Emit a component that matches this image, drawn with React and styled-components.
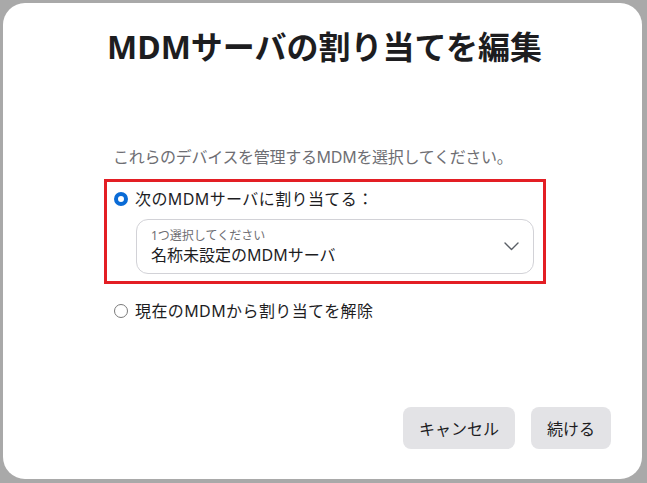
import React from "react";
import styled, { createGlobalStyle } from "styled-components";

const Global = createGlobalStyle`
  html, body { margin: 0; padding: 0; background: #a9a9a9; }
  body { font-family: "Noto Sans", "Noto Sans CJK JP", sans-serif; }
  #root { padding: 3px 5px 4px 3px; box-sizing: border-box; height: 483px; }
`;

const Panel = styled.div`
  background: #fff;
  border-radius: 22px;
  height: 476px;
  box-sizing: border-box;
  padding: 24px 31px 30px 31px;
  display: flex;
  flex-direction: column;
`;

const Title = styled.h1`
  margin: 0;
  text-align: center;
  font-size: 32px;
  line-height: 40px;
  font-weight: 700;
  color: #1d1d1f;
  padding-left: 4px;
`;

const Content = styled.div`
  width: 442px;
  margin: 79px 0 0 70px;
  display: flex;
  flex-direction: column;
`;

const Subtitle = styled.p`
  margin: 0 0 11px 9px;
  font-size: 16px;
  line-height: 22px;
  letter-spacing: -0.3px;
  color: #6e6e73;
`;

const Highlight = styled.div`
  border: 3px solid #e31e24;
  padding: 6px 9px 7px 7px;
  display: flex;
  flex-direction: column;
  gap: 9px;
`;

const OptionRow = styled.label`
  display: flex;
  align-items: center;
  gap: 7px;
  font-size: 16px;
  line-height: 22px;
  letter-spacing: 0.4px;
  color: #1d1d1f;
  padding-left: ${(p) => p.$indent || 0}px;
  margin-top: ${(p) => p.$top || 0}px;
`;

const Radio = styled.span`
  width: 14px;
  height: 14px;
  border-radius: 50%;
  box-sizing: border-box;
  flex: none;
  border: ${(p) => (p.$checked ? "4px solid #0a6bd6" : "1.5px solid #7a7a7a")};
  background: #fff;
`;

const Select = styled.div`
  margin-left: 22px;
  height: 55px;
  box-sizing: border-box;
  border: 1px solid #d2d2d7;
  border-radius: 12px;
  padding: 7px 14px 0 14px;
  display: flex;
  align-items: center;
  justify-content: space-between;
`;

const SelectText = styled.div`
  display: flex;
  flex-direction: column;
  align-self: flex-start;
`;

const SelectHint = styled.span`
  font-size: 12px;
  line-height: 17px;
  color: #6e6e73;
`;

const SelectValue = styled.span`
  font-size: 16px;
  line-height: 23px;
  color: #1d1d1f;
`;

const Chevron = styled.svg`
  width: 15px;
  height: 9px;
  margin-top: -7px;
`;

const Footer = styled.div`
  margin-top: auto;
  display: flex;
  justify-content: flex-end;
  gap: 16px;
`;

const Button = styled.button`
  height: 42px;
  padding: 0 16px;
  border: none;
  border-radius: 8px;
  background: #e3e3e6;
  font-family: "Noto Sans", "Noto Sans CJK JP", sans-serif;
  font-size: 16px;
  color: #1d1d1f;
`;

export default function App() {
  return (
    <>
      <Global />
      <Panel>
        <Title>MDMサーバの割り当てを編集</Title>
        <Content>
          <Subtitle>これらのデバイスを管理するMDMを選択してください。</Subtitle>
          <Highlight>
            <OptionRow>
              <Radio $checked />
              次のMDMサーバに割り当てる：
            </OptionRow>
            <Select>
              <SelectText>
                <SelectHint>1つ選択してください</SelectHint>
                <SelectValue>名称未設定のMDMサーバ</SelectValue>
              </SelectText>
              <Chevron viewBox="0 0 15 9">
                <path d="M1 1l6.5 6.5L14 1" fill="none" stroke="#5a5f66" strokeWidth="1.4" strokeLinecap="round" strokeLinejoin="round" />
              </Chevron>
            </Select>
          </Highlight>
          <OptionRow $indent={10} $top={16}>
            <Radio />
            現在のMDMから割り当てを解除
          </OptionRow>
        </Content>
        <Footer>
          <Button>キャンセル</Button>
          <Button>続ける</Button>
        </Footer>
      </Panel>
    </>
  );
}
